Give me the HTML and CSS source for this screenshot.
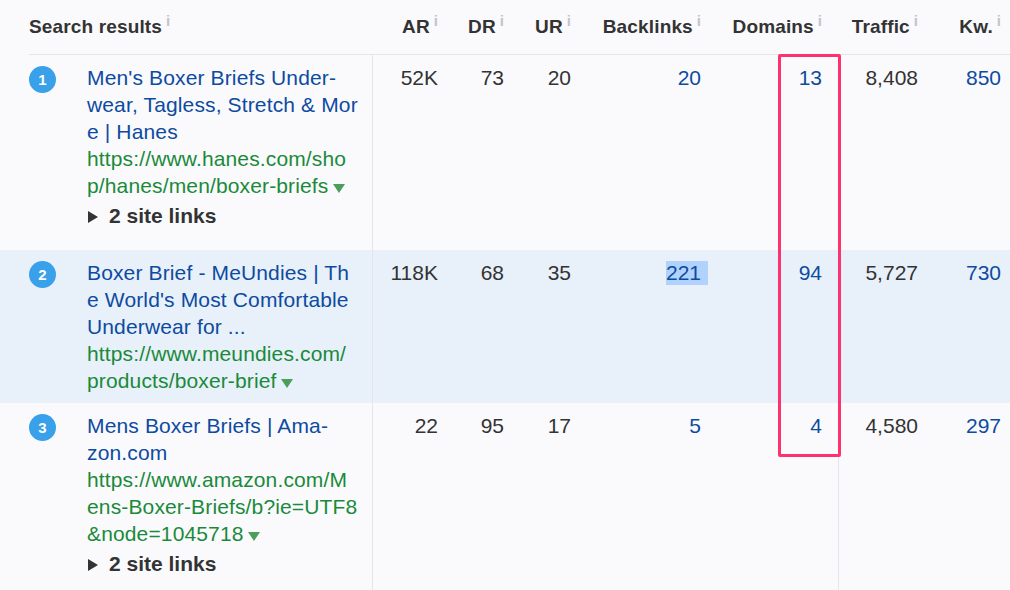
FILE: index.html
```html
<!DOCTYPE html>
<html lang="en">
<head>
<meta charset="utf-8">
<title>Search results</title>
<link rel="stylesheet" href="styles.css">
</head>
<body>
<main class="table">
  <div class="row head">
    <div class="h first">Search results<i>i</i></div>
    <div class="h">AR<i>i</i></div>
    <div class="h">DR<i>i</i></div>
    <div class="h">UR<i>i</i></div>
    <div class="h">Backlinks<i>i</i></div>
    <div class="h">Domains<i>i</i></div>
    <div class="h">Traffic<i>i</i></div>
    <div class="h">Kw.<i>i</i></div>
  </div>

  <div class="row r1">
    <div class="rank"><span class="badge">1</span></div>
    <div class="title">
      <a class="link">Men's Boxer Briefs Under-<br>wear, Tagless, Stretch &amp; Mor<br>e | Hanes</a>
      <div class="url">https://www.hanes.com/sho<br>p/hanes/men/boxer-briefs<span class="down"></span></div>
      <div class="sites"><span class="right"></span>2 site links</div>
    </div>
    <div class="n">52K</div><div class="n">73</div><div class="n">20</div>
    <div class="n blue">20</div>
    <div class="n blue dom">13</div>
    <div class="n traffic">8,408</div>
    <div class="n blue">850</div>
  </div>

  <div class="row r2 on">
    <div class="rank"><span class="badge">2</span></div>
    <div class="title">
      <a class="link">Boxer Brief - MeUndies | Th<br>e World's Most Comfortable<br>Underwear for ...</a>
      <div class="url">https://www.meundies.com/<br>products/boxer-brief<span class="down"></span></div>
    </div>
    <div class="n">118K</div><div class="n">68</div><div class="n">35</div>
    <div class="n blue"><span class="sel">221</span></div>
    <div class="n blue dom">94</div>
    <div class="n traffic">5,727</div>
    <div class="n blue">730</div>
  </div>

  <div class="row r3">
    <div class="rank"><span class="badge">3</span></div>
    <div class="title">
      <a class="link">Mens Boxer Briefs | Ama-<br>zon.com</a>
      <div class="url">https://www.amazon.com/M<br>ens-Boxer-Briefs/b?ie=UTF8<br>&amp;node=1045718<span class="down"></span></div>
      <div class="sites"><span class="right"></span>2 site links</div>
    </div>
    <div class="n">22</div><div class="n">95</div><div class="n">17</div>
    <div class="n blue">5</div>
    <div class="n blue dom">4</div>
    <div class="n traffic">4,580</div>
    <div class="n blue">297</div>
  </div>

  <div class="mark"></div>
</main>
</body>
</html>
```
FILE: styles.css
```css
* { box-sizing: border-box; }
html, body { margin: 0; height: 100%; }
body {
  background: #fafafd;
  color: #333;
  font-family: "Liberation Sans", Arial, sans-serif;
  font-size: 21px;
  line-height: 27px;
  overflow: hidden;
}
.table { position: relative; width: 1010px; height: 590px; overflow: hidden; }
.row {
  display: grid;
  grid-template-columns: 87px 286px 65px 66px 67px 130px 137px 80px 83px;
  padding-right: 9px;
}
.head {
  grid-template-columns: 344px 65px 66px 67px 130px 121px 96px 83px;
  height: 55px;
  margin-left: 29px;
  border-bottom: 1px solid #e6e6ea;
}
.h {
  font-weight: 700;
  font-size: 19px;
  letter-spacing: 0.15px;
  line-height: 54px;
  text-align: right;
  white-space: nowrap;
  color: #333;
}
.h.first { text-align: left; }
.h i {
  font-style: normal;
  font-weight: 700;
  font-size: 15px;
  line-height: 12px;
  letter-spacing: 0;
  color: #c4c4c8;
  margin-left: 4px;
  position: relative;
  top: -7px;
}
.r1 { height: 195px; }
.r2 { height: 153px; background: #e8f0fa; }
.r3 { height: 187px; }
.rank { padding: 11px 0 0 29px; }
.badge {
  display: block;
  width: 27px;
  height: 27px;
  border-radius: 50%;
  background: #39a0ea;
  color: #fff;
  font-size: 15px;
  font-weight: 700;
  line-height: 27px;
  text-align: center;
}
.title { padding-top: 9px; border-right: 1px solid #e6e6ea; white-space: nowrap; letter-spacing: 0.14px; }
.link { display: block; color: #0d4ba0; }
.url { color: #1a8a3a; }
.down {
  display: inline-block;
  margin-left: 4px;
  border-left: 6px solid transparent;
  border-right: 6px solid transparent;
  border-top: 9px solid #4c9f5a;
}
.sites { margin-top: 3px; font-weight: 700; color: #333; letter-spacing: 0; }
.right {
  display: inline-block;
  margin: 0 11px 0 1px;
  border-top: 6px solid transparent;
  border-bottom: 6px solid transparent;
  border-left: 10px solid #333;
}
.n { padding-top: 9px; text-align: right; }
.blue { color: #0d4ba0; }
.dom { padding-right: 16px; }
.traffic { border-left: 1px solid #e6e6ea; }
.r1 .traffic, .r2 .traffic { border-left-color: transparent; }
.sel { display: inline-block; background: #b0d2fd; padding-right: 7px; margin-right: -7px; height: 24px; line-height: 24px; margin-top: 2px; vertical-align: top; }
.mark {
  position: absolute;
  left: 778px;
  top: 54px;
  width: 63px;
  height: 403px;
  border: 3px solid #ff3270;
  border-radius: 2px;
}
```
